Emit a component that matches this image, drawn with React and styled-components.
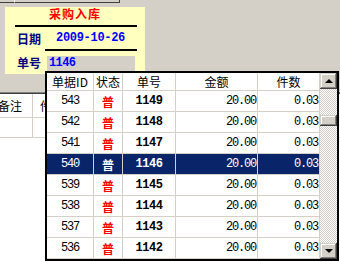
import styled, { createGlobalStyle } from 'styled-components';

const rows = [
  { id: 543, no: 1149 },
  { id: 542, no: 1148 },
  { id: 541, no: 1147 },
  { id: 540, no: 1146 },
  { id: 539, no: 1145 },
  { id: 538, no: 1144 },
  { id: 537, no: 1143 },
  { id: 536, no: 1142 },
];

const columns = [
  { key: 'id', title: '单据ID', width: 47 },
  { key: 'state', title: '状态', width: 29 },
  { key: 'no', title: '单号', width: 53 },
  { key: 'amount', title: '金额', width: 82 },
  { key: 'count', title: '件数', width: 62 },
];

const selectedId = 540;

function App() {
  return (
    <>
      <GlobalStyle />
      <Screen>
        <TopStrip>
          <TopCell $width={14} $edge="#fff" />
          <TopCell $width={104} $edge="#404040" />
        </TopStrip>

        {/* 单据头（黄色卡片） */}
        <Voucher>
          <Title>采购入库</Title>
          <Rule $left={10} $width={122} />
          <Field $height={22}>
            <Label>日期</Label>
            <DateValue>2009-10-26</DateValue>
          </Field>
          <Rule $left={40} $width={92} />
          <Field $height={22}>
            <Label>单号</Label>
            <NumberBox>1146</NumberBox>
          </Field>
        </Voucher>

        {/* 后面的明细表格，被下拉框挡住大半 */}
        <BackGrid>
          <BackRow $head>
            <BackCell $width={45}>备注</BackCell>
            <BackCell $width={39}>件数</BackCell>
            <BackCell $width={300} />
          </BackRow>
          <BackRow>
            <BackCell $width={45} />
            <BackCell $width={39} />
            <BackCell $width={300} />
          </BackRow>
        </BackGrid>

        {/* 单号下拉列表 */}
        <Dropdown>
          <List>
            {columns.map((c) => (
              <HeadCell key={c.key} $width={c.width}>{c.title}</HeadCell>
            ))}
            {rows.map((r) => {
              const active = r.id === selectedId;
              return (
                <Row key={r.id} $active={active}>
                  <Cell $width={47}><Num>{r.id}</Num></Cell>
                  <Cell $width={29}><State $active={active}>普</State></Cell>
                  <Cell $width={53}><Num $bold>{r.no}</Num></Cell>
                  <Cell $width={82} $right><Num>20.00</Num></Cell>
                  <Cell $width={62} $right><Num>0.03</Num></Cell>
                </Row>
              );
            })}
          </List>
          <ScrollBar>
            <ArrowButton><Arrow $dir="up" /></ArrowButton>
            <Track>
              <Thumb />
            </Track>
            <ArrowButton><Arrow $dir="down" /></ArrowButton>
          </ScrollBar>
        </Dropdown>
      </Screen>
    </>
  );
}

// --- styled-components ---

const GlobalStyle = createGlobalStyle`
  html, body { margin: 0; padding: 0; }
  body {
    background: #d4d0c8;
    font-family: "Noto Sans CJK SC", "Liberation Sans", sans-serif;
    font-size: 12px;
  }
`;

const Screen = styled.div`
  position: relative;
  width: 340px; height: 262px;
  overflow: hidden;
  display: flex; flex-direction: column;
`;

const TopStrip = styled.div`
  display: flex;
  height: 3px;
`;

const TopCell = styled.div`
  width: ${(p) => p.$width}px;
  height: 2px;
  border-bottom: 1px solid #404040;
  border-right: 1px solid ${(p) => p.$edge};
`;

const Voucher = styled.div`
  margin: 4px 0 0 5px;
  width: 140px; height: 67px;
  background: #ffffc0;
  display: flex; flex-direction: column;
`;

const Title = styled.div`
  height: 18px; line-height: 14px;
  text-align: center;
  color: #ff0000; font-weight: bold; font-size: 12px;
  letter-spacing: 1px;
`;

const Rule = styled.div`
  margin-left: ${(p) => p.$left}px;
  width: ${(p) => p.$width}px;
  height: 2px;
  background: #000;
`;

const Field = styled.div`
  height: ${(p) => p.$height}px;
  display: flex; align-items: center;
  padding-left: 12px;
`;

const Label = styled.span`
  width: 30px;
  color: #000080; font-weight: bold; font-size: 12px;
`;

const monoBold = `
  font-family: "Liberation Mono", "DejaVu Sans Mono", monospace;
  font-weight: bold; font-size: 12px;
  color: #0000ff;
`;

const DateValue = styled.span`
  ${monoBold}
  padding-left: 9px;
  letter-spacing: -0.3px;
`;

const NumberBox = styled.div`
  ${monoBold}
  width: 86px; height: 15px; line-height: 15px;
  padding-left: 2px;
  margin-top: 3px;
  background: #d4d0c8;
  letter-spacing: -0.6px;
`;

const BackGrid = styled.div`
  flex: 1;
  margin: 18px 0 0 -12px;
  background: #fff;
  border-top: 1px solid #808080;
`;

const BackRow = styled.div`
  display: flex;
  height: ${(p) => (p.$head ? 25 : 20)}px;
  box-sizing: border-box;
  border-top: ${(p) => (p.$head ? '1px solid #404040' : 'none')};
  border-bottom: 1px solid #d4d0c8;
`;

const BackCell = styled.div`
  flex: none;
  width: ${(p) => p.$width}px;
  box-sizing: border-box;
  border-right: 1px solid #d4d0c8;
  display: flex; align-items: center; justify-content: center;
  color: #000;
`;

const Dropdown = styled.div`
  position: absolute; left: 45px; top: 71px;
  width: 294px; height: 190px;
  box-sizing: border-box;
  border: 2px solid #000;
  background: #fff;
  display: flex;
`;

const List = styled.div`
  width: 273px;
  display: flex; flex-wrap: wrap; align-content: flex-start;
`;

const HeadCell = styled.div`
  width: ${(p) => p.$width}px; height: 18px;
  box-sizing: border-box;
  border-right: 1px solid #d4d0c8;
  border-bottom: 1px solid #d4d0c8;
  display: flex; align-items: center; justify-content: center;
  color: #000;
`;

const Row = styled.div`
  width: 273px; height: 21px;
  display: flex;
  background: ${(p) => (p.$active ? '#0a246a' : '#fff')};
  color: ${(p) => (p.$active ? '#fff' : '#000')};
`;

const Cell = styled.div`
  width: ${(p) => p.$width}px;
  box-sizing: border-box;
  border-right: 1px solid #d4d0c8;
  border-bottom: 1px solid #d4d0c8;
  display: flex; align-items: center;
  justify-content: ${(p) => (p.$right ? 'flex-end' : 'center')};
  padding-right: ${(p) => (p.$right ? 1 : 0)}px;
`;

const Num = styled.span`
  font-family: "Liberation Mono", "DejaVu Sans Mono", monospace;
  font-size: 12px;
  font-weight: ${(p) => (p.$bold ? 'bold' : 'normal')};
  letter-spacing: ${(p) => (p.$bold ? -0.45 : -1.2)}px;
`;

const State = styled.span`
  font-weight: bold; font-size: 12px;
  color: ${(p) => (p.$active ? '#fff' : '#ff0000')};
`;

const ScrollBar = styled.div`
  width: 17px;
  display: flex; flex-direction: column;
`;

const bevel = `
  background: #d4d0c8;
  box-shadow: inset -1px -1px #404040, inset 1px 1px #d4d0c8,
    inset -2px -2px #808080, inset 2px 2px #fff;
`;

const ArrowButton = styled.div`
  ${bevel}
  height: 16px;
  display: flex; align-items: center; justify-content: center;
`;

const Arrow = styled.div`
  width: 0; height: 0;
  border-left: 4px solid transparent;
  border-right: 4px solid transparent;
  ${(p) => (p.$dir === 'up'
    ? 'border-bottom: 4px solid #000;'
    : 'border-top: 4px solid #000;')}
`;

const Track = styled.div`
  flex: 1;
  background-color: #fff;
  background-image: conic-gradient(#d4d0c8 25%, #fff 0 50%, #d4d0c8 0 75%, #fff 0);
  background-size: 2px 2px;
  padding-top: 26px;
`;

const Thumb = styled.div`
  ${bevel}
  height: 11px;
`;

export default App;
